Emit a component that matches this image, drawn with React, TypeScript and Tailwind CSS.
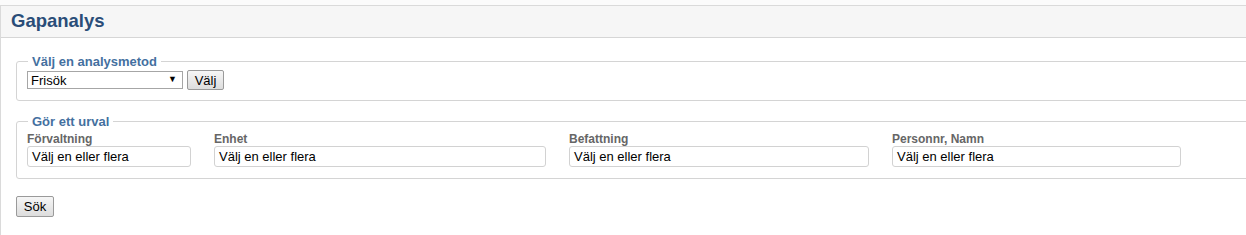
import React from 'react';

const fields = [
  { label: 'Förvaltning', width: 'w-[164px]' },
  { label: 'Enhet', width: 'w-[332px]' },
  { label: 'Befattning', width: 'w-[300px]' },
  { label: 'Personnr, Namn', width: 'w-[289px]' },
];

const App: React.FC = () => {
  return (
    <div className="w-[1246px] h-[235px] overflow-hidden bg-[#fbfbfb] pt-[5px] font-['Liberation_Sans',Arial,sans-serif]">
      <div className="w-[1280px] h-[240px] bg-white border-l border-t border-[#dadada]">
        {/* Header */}
        <div className="h-[32px] bg-[#f6f6f6] border-b border-[#d6d6d6] flex items-center pl-[10px]">
          <h1 className="text-[18.5px] font-bold text-[#2a4d78] leading-none">Gapanalys</h1>
        </div>

        <div className="pl-[15px]">
          {/* Analysmetod */}
          <fieldset className="mt-[16px] border border-[#d4d4d4] rounded-[3px] pl-[10px] pb-[10px]">
            <legend className="ml-[1px] px-[4px] text-[13px] leading-[15px] font-bold text-[#44709f]">
              Välj en analysmetod
            </legend>
            <div className="flex items-center gap-[4px] mt-[1px]">
              <div className="relative w-[156px] h-[18px] border border-[#a6a6a6] bg-white flex items-center pl-[3px]">
                <span className="text-[13px] text-black leading-none">Frisök</span>
                <span className="absolute right-[5px] top-[3px] text-[9px] leading-none text-black">▼</span>
              </div>
              <button className="w-[37px] h-[20px] border border-[#9a9a9a] rounded-[2px] bg-gradient-to-b from-[#f6f6f6] to-[#dddddd] text-[13px] text-black leading-none">
                Välj
              </button>
            </div>
          </fieldset>

          {/* Urval */}
          <fieldset className="mt-[13px] border border-[#d4d4d4] rounded-[3px] pl-[10px] pb-[11px]">
            <legend className="ml-[1px] px-[4px] text-[13px] leading-[15px] font-bold text-[#44709f]">
              Gör ett urval
            </legend>
            <div className="flex gap-[23px] mt-[3px]">
              {fields.map((f) => (
                <div key={f.label} className="flex flex-col">
                  <label className="text-[12px] leading-[14px] font-bold text-[#666666]">{f.label}</label>
                  <div className={`${f.width} h-[21px] border border-[#d2d2d2] rounded-[3px] bg-white flex items-center pl-[4px]`}>
                    <span className="text-[13px] text-black leading-none">Välj en eller flera</span>
                  </div>
                </div>
              ))}
            </div>
          </fieldset>

          <button className="mt-[17px] w-[38px] h-[21px] border border-[#9a9a9a] rounded-[2px] bg-gradient-to-b from-[#f6f6f6] to-[#dddddd] text-[13px] text-black leading-none">
            Sök
          </button>
        </div>
      </div>
    </div>
  );
};

export default App;
